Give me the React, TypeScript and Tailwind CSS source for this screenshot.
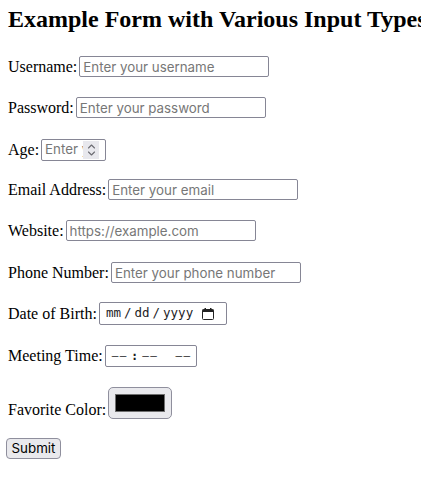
import React from "react";

const inputBase =
  "ml-[2px] h-[21px] w-[190px] rounded-[2px] border border-[#868695] bg-white px-[3px] font-['Inter',sans-serif] text-[13.33px] text-black outline-none placeholder:text-[#777777]";

function Row({ label, children, className }: { label?: string; children: React.ReactNode; className: string }) {
  return (
    <div className={"flex " + className}>
      {label && <label className="leading-[18px]">{label}</label>}
      {children}
    </div>
  );
}

function Chevrons() {
  return (
    <svg width="9" height="14" viewBox="0 0 9 14" fill="none" stroke="#6c6c72" strokeWidth="1.1" strokeLinecap="round" strokeLinejoin="round">
      <path d="M1.5 5 L4.5 2 L7.5 5" />
      <path d="M1.5 9 L4.5 12 L7.5 9" />
    </svg>
  );
}

function CalendarIcon() {
  return (
    <svg width="12" height="12" viewBox="0 0 12 12" fill="none">
      <rect x="0.5" y="1.5" width="11" height="10" rx="1" stroke="#222" strokeWidth="1" />
      <rect x="0.5" y="1.5" width="11" height="2.5" fill="#222" />
      <rect x="2.5" y="0" width="1.5" height="2" fill="#222" />
      <rect x="8" y="0" width="1.5" height="2" fill="#222" />
    </svg>
  );
}

export default function App() {
  return (
    <div className="h-[485px] w-[421px] overflow-hidden bg-white px-2 font-['Liberation_Serif',serif] text-[16px] text-black">
      <h2 className="whitespace-nowrap pt-[5px] text-[24px] font-bold leading-[28px]">
        Example Form with Various Input Types
      </h2>

      <form className="flex flex-col" onSubmit={(e) => e.preventDefault()}>
        <Row label="Username:" className="mt-[23px] h-[21px] items-center">
          <input type="text" placeholder="Enter your username" className={inputBase} />
        </Row>

        <Row label="Password:" className="mt-[20px] h-[21px] items-center">
          <input type="password" placeholder="Enter your password" className={inputBase} />
        </Row>

        <Row label="Age:" className="mt-[21px] h-[22px] items-center">
          <div className="ml-[2px] flex h-[22px] w-[65px] items-stretch rounded-[2px] border border-[#868695] bg-white">
            <input
              type="text"
              placeholder="Enter your age"
              className="w-0 min-w-0 flex-1 bg-transparent pl-[3px] font-['Inter',sans-serif] text-[13.33px] outline-none placeholder:text-[#777777]"
            />
            <div className="my-[1px] mr-[6px] flex w-[16px] items-center justify-center bg-[#e8e8ed]">
              <Chevrons />
            </div>
          </div>
        </Row>

        <Row label="Email Address:" className="mt-[18px] h-[21px] items-center">
          <input type="email" placeholder="Enter your email" className={inputBase} />
        </Row>

        <Row label="Website:" className="mt-[20px] h-[21px] items-center">
          <input type="url" placeholder="https://example.com" className={inputBase} />
        </Row>

        <Row label="Phone Number:" className="mt-[21px] h-[21px] items-center">
          <input type="tel" placeholder="Enter your phone number" className={inputBase} />
        </Row>

        <Row label="Date of Birth:" className="mt-[19px] h-[23px] items-center">
          <div className="ml-[2px] flex h-[23px] w-[128px] items-center rounded-[2px] border border-[#868695] bg-white pl-[6px] font-['DejaVu_Sans_Mono',monospace] text-[12.5px] text-[#1c1c1e]">
            <span>mm</span>
            <span className="mx-[3px]">/</span>
            <span>dd</span>
            <span className="mx-[3px]">/</span>
            <span>yyyy</span>
            <span className="ml-[9px] flex">
              <CalendarIcon />
            </span>
          </div>
        </Row>

        <Row label="Meeting Time:" className="mt-[20px] h-[22px] items-center">
          <div className="ml-[2px] flex h-[22px] w-[92px] items-center rounded-[2px] border border-[#868695] bg-white pl-[6px] font-['DejaVu_Sans_Mono',monospace] text-[11px] text-[#1c1c1e]">
            <span className="tracking-[1.5px]">––</span>
            <span className="ml-[3px] text-[12px] font-bold">:</span>
            <span className="ml-[4px] tracking-[1.5px]">––</span>
            <span className="ml-[17px] tracking-[1.5px]">––</span>
          </div>
        </Row>

        <Row label="Favorite Color:" className="mt-[20px] h-[32px] items-end">
          <div className="ml-[2px] flex h-[32px] w-[64px] items-center justify-center rounded-[5px] border border-[#8f8f9d] bg-[#e9e9ed]">
            <div className="h-[18px] w-[50px] border border-[#6f6f6f] bg-black" />
          </div>
        </Row>

        <div className="mt-[19px] flex">
          <button
            type="submit"
            className="-ml-[2px] h-[21px] w-[55px] rounded-[4px] border border-[#8f8f9d] bg-[#e9e9ed] font-['Inter',sans-serif] text-[13.33px] leading-[19px] text-black"
          >
            Submit
          </button>
        </div>
      </form>
    </div>
  );
}
